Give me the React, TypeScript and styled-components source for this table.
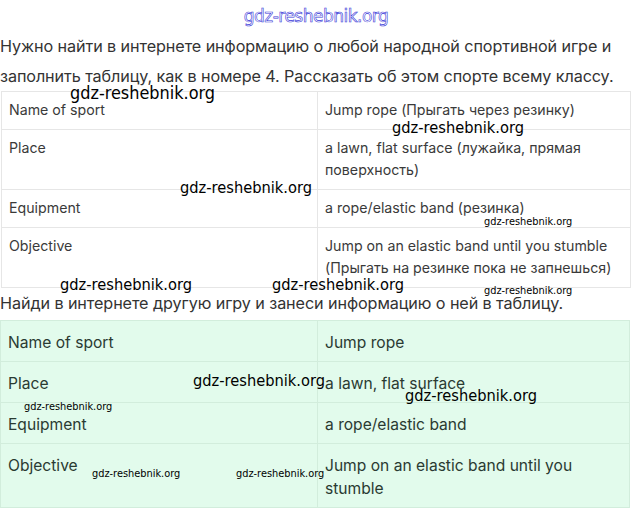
import styled, { createGlobalStyle } from "styled-components"

const Global = createGlobalStyle`
    html, body {
        margin: 0;
        padding: 0;
        background: #fff;
    }
    body {
        font-family: Inter, "Noto Sans", sans-serif;
    }
`

const Pagina = styled.div`
    position: relative;
    width: 632px;
    height: 508px;
    overflow: hidden;
    background: #fff;
`

const Topo = styled.div`
    height: 31px;
    display: flex;
    justify-content: center;
    align-items: center;
    font-family: "DejaVu Sans", sans-serif;
    font-size: 17px;
    letter-spacing: -0.5px;
    color: #fff;
    -webkit-text-stroke: 0.6px #3a3ad8;
`

const Paragrafo = styled.p<{ $abaixo?: number }>`
    margin: 0 0 ${p => p.$abaixo ?? 0}px;
    font-size: 16.2px;
    line-height: 30px;
    color: #333;
    letter-spacing: -0.1px;
`

const Tabela = styled.table<{ $verde?: boolean }>`
    width: 629px;
    margin-left: ${p => (p.$verde ? "0" : "1px")};
    border-collapse: collapse;
    table-layout: fixed;
    background: ${p => (p.$verde ? "#e2fbec" : "#fff")};
    color: ${p => (p.$verde ? "#2a3a32" : "#3a3a3a")};
    font-size: ${p => (p.$verde ? "15.6px" : "14.2px")};
    line-height: ${p => (p.$verde ? "23px" : "22px")};

    td {
        border: 1px solid ${p => (p.$verde ? "#d2eddc" : "#e6e6e6")};
        padding: ${p => (p.$verde ? "10px 7px 7px" : "7px 7px 8px")};
        vertical-align: top;
    }
`

const Coluna = styled.col<{ $largura: number }>`
    width: ${p => p.$largura}px;
`

const Marca = styled.span<{ $x: number; $y: number; $pequena?: boolean; $grande?: boolean }>`
    position: absolute;
    left: ${p => p.$x}px;
    top: ${p => p.$y}px;
    font-family: "Liberation Sans Narrow", "DejaVu Sans Condensed", sans-serif;
    font-size: ${p => (p.$pequena ? "10.9px" : p.$grande ? "17.9px" : "16.3px")};
    line-height: 1;
    color: #000;
    white-space: nowrap;
`

const linhas1 = [
    ["Name of sport", "Jump rope (Прыгать через резинку)"],
    ["Place", "a lawn, flat surface (лужайка, прямая поверхность)"],
    ["Equipment", "a rope/elastic band (резинка)"],
    ["Objective", "Jump on an elastic band until you stumble (Прыгать на резинке пока не запнешься)"],
]

const linhas2 = [
    ["Name of sport", "Jump rope"],
    ["Place", "a lawn, flat surface"],
    ["Equipment", "a rope/elastic band"],
    ["Objective", "Jump on an elastic band until you stumble"],
]

const marcas = [
    { x: 70, y: 84, grande: true },
    { x: 392, y: 120 },
    { x: 180, y: 180 },
    { x: 484, y: 217, pequena: true },
    { x: 60, y: 277 },
    { x: 272, y: 277 },
    { x: 484, y: 286, pequena: true },
    { x: 193, y: 373 },
    { x: 405, y: 388 },
    { x: 24, y: 402, pequena: true },
    { x: 92, y: 469, pequena: true },
    { x: 236, y: 469, pequena: true },
]

function Grade({ linhas, verde, esquerda }: { linhas: string[][]; verde?: boolean; esquerda: number }) {
    return (
        <Tabela $verde={verde}>
            <colgroup>
                <Coluna $largura={esquerda} />
                <Coluna $largura={629 - esquerda} />
            </colgroup>
            <tbody>
                {linhas.map(([a, b]) => (
                    <tr key={a}>
                        <td>{a}</td>
                        <td>{b}</td>
                    </tr>
                ))}
            </tbody>
        </Tabela>
    )
}

function App() {
    return (
        <Pagina>
            <Global />
            <Topo>gdz-reshebnik.org</Topo>
            <Paragrafo>
                Нужно найти в интернете информацию о любой народной спортивной игре и заполнить таблицу, как в номере 4. Рассказать об этом спорте всему классу.
            </Paragrafo>
            <Grade linhas={linhas1} esquerda={316} />
            <Paragrafo $abaixo={2}>Найди в интернете другую игру и занеси информацию о ней в таблицу.</Paragrafo>
            <Grade linhas={linhas2} esquerda={317} verde />
            {marcas.map((m, i) => (
                <Marca key={i} $x={m.x} $y={m.y} $pequena={m.pequena} $grande={m.grande}>
                    gdz-reshebnik.org
                </Marca>
            ))}
        </Pagina>
    )
}

export default App
